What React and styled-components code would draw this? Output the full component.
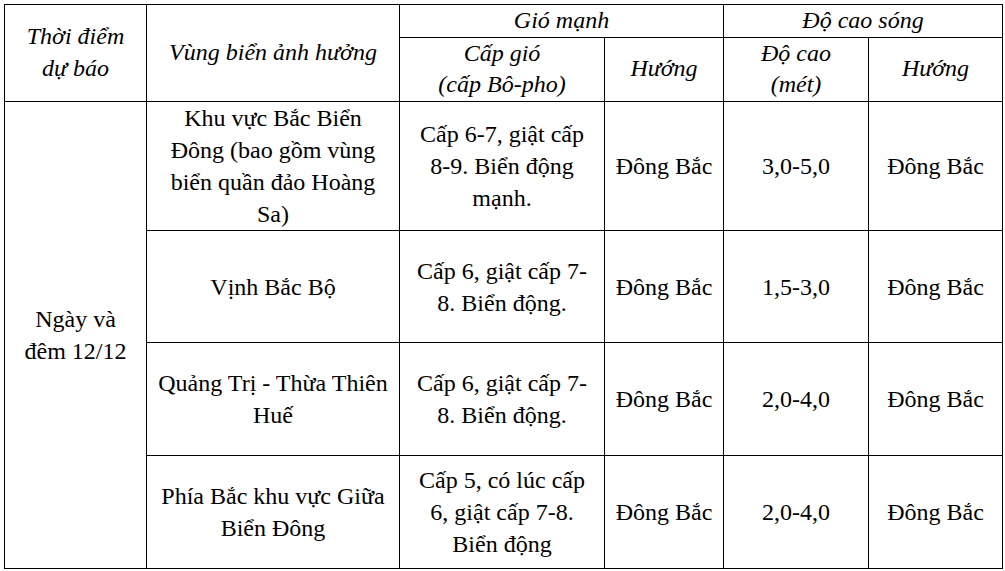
import React from "react";
import styled, { createGlobalStyle } from "styled-components";

const Global = createGlobalStyle`
  html, body { margin: 0; padding: 0; background: #fff; }
  body { font-family: 'Liberation Serif', 'Times New Roman', serif; color: #000; }
`;

const Page = styled.div`
  padding: 4px 0 0 4px;
`;

const Table = styled.table`
  border-collapse: collapse;
  table-layout: fixed;
  width: 998px;
  font-family: 'Liberation Serif', 'Times New Roman', serif;
  font-size: 24px;
  line-height: 32.2px;
  color: #000;
`;

const Cell = styled.td`
  border: 1px solid #000;
  padding: 0 2px;
  text-align: center;
  vertical-align: middle;
  white-space: nowrap;
  font-style: ${(p) => (p.$head ? "italic" : "normal")};
  line-height: ${(p) => (p.$head ? "31.5px" : "32.2px")};
`;

const Row = styled.tr`
  height: ${(p) => p.$h}px;
`;

const cols = [142, 253, 205, 119, 145, 134];

const L = ({ lines }) =>
  lines.map((l, i) => (
    <React.Fragment key={i}>
      {i > 0 && <br />}
      {l}
    </React.Fragment>
  ));

const rows = [
  {
    h: 129,
    area: ["Khu vực Bắc Biển", "Đông (bao gồm vùng", "biển quần đảo Hoàng", "Sa)"],
    wind: ["Cấp 6-7, giật cấp", "8-9. Biển động", "mạnh."],
    wave: "3,0-5,0",
  },
  {
    h: 112,
    area: ["Vịnh Bắc Bộ"],
    wind: ["Cấp 6, giật cấp 7-", "8. Biển động."],
    wave: "1,5-3,0",
  },
  {
    h: 113,
    area: ["Quảng Trị - Thừa Thiên", "Huế"],
    wind: ["Cấp 6, giật cấp 7-", "8. Biển động."],
    wave: "2,0-4,0",
  },
  {
    h: 113,
    area: ["Phía Bắc khu vực Giữa", "Biển Đông"],
    wind: ["Cấp 5, có lúc cấp", "6, giật cấp 7-8.", "Biển động"],
    wave: "2,0-4,0",
  },
];

export default function App() {
  return (
    <Page>
      <Global />
      <Table>
        <colgroup>
          {cols.map((w, i) => (
            <col key={i} style={{ width: w }} />
          ))}
        </colgroup>
        <tbody>
          <Row $h={32}>
            <Cell $head rowSpan={2}>
              <L lines={["Thời điểm", "dự báo"]} />
            </Cell>
            <Cell $head rowSpan={2}>Vùng biển ảnh hưởng</Cell>
            <Cell $head colSpan={2}>Gió mạnh</Cell>
            <Cell $head colSpan={2}>Độ cao sóng</Cell>
          </Row>
          <Row $h={64}>
            <Cell $head>
              <L lines={["Cấp gió", "(cấp Bô-pho)"]} />
            </Cell>
            <Cell $head>Hướng</Cell>
            <Cell $head>
              <L lines={["Độ cao", "(mét)"]} />
            </Cell>
            <Cell $head>Hướng</Cell>
          </Row>
          {rows.map((r, i) => (
            <Row $h={r.h} key={i}>
              {i === 0 && (
                <Cell rowSpan={4}>
                  <L lines={["Ngày và", "đêm 12/12"]} />
                </Cell>
              )}
              <Cell>
                <L lines={r.area} />
              </Cell>
              <Cell>
                <L lines={r.wind} />
              </Cell>
              <Cell>Đông Bắc</Cell>
              <Cell>{r.wave}</Cell>
              <Cell>Đông Bắc</Cell>
            </Row>
          ))}
        </tbody>
      </Table>
    </Page>
  );
}
